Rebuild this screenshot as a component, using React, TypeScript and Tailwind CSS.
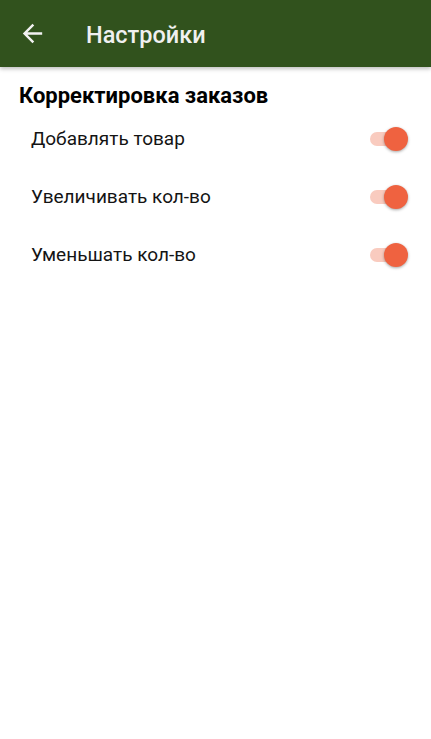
import { useState } from 'react'

const rows = ['Добавлять товар', 'Увеличивать кол-во', 'Уменьшать кол-во']

function Toggle({ on, onClick }: { on: boolean; onClick: () => void }) {
  return (
    <button onClick={onClick} className="relative w-[40px] h-[24px] shrink-0">
      <span
        className={
          on
            ? 'absolute left-[2px] top-[5px] w-[31px] h-[14px] rounded-full bg-[#f9cbbf]'
            : 'absolute left-[2px] top-[5px] w-[31px] h-[14px] rounded-full bg-[#bdbdbd]'
        }
      />
      <span
        className={
          on
            ? 'absolute left-[16px] top-0 w-[24px] h-[24px] rounded-full bg-[#ef6240] shadow-[0_1px_3px_rgba(0,0,0,0.35)]'
            : 'absolute left-0 top-0 w-[24px] h-[24px] rounded-full bg-[#f1f1f1] shadow-[0_1px_3px_rgba(0,0,0,0.35)]'
        }
      />
    </button>
  )
}

export default function App() {
  const [values, setValues] = useState([true, true, true])

  return (
    <div className="w-[431px] h-[739px] bg-white font-['Roboto',sans-serif] overflow-hidden">
      <div className="h-[67px] bg-[#31521d] flex items-center shadow-[0_2px_4px_rgba(0,0,0,0.25)] relative">
        <div className="w-[29px] h-[29px] ml-[18px]">
          <svg viewBox="0 0 24 24" width="29" height="29" fill="#f2f2f2">
            <path d="M20 11H7.83l5.59-5.59L12 4l-8 8 8 8 1.41-1.41L7.83 13H20v-2z" />
          </svg>
        </div>
        <div className="ml-[39px] pt-[4px] text-[23.5px] font-medium text-[#f0f0f0]">Настройки</div>
      </div>

      <div className="pl-[19px] pt-[13px] text-[22px] font-bold text-black leading-[32px]">
        Корректировка заказов
      </div>

      <div className="flex flex-col -mt-[2px]">
        {rows.map((label, i) => (
          <div key={label} className="h-[58px] flex items-center justify-between pl-[31px] pr-[23px]">
            <span className="text-[19px] text-[#141414]">{label}</span>
            <Toggle
              on={values[i]}
              onClick={() => setValues(values.map((v, j) => (j === i ? !v : v)))}
            />
          </div>
        ))}
      </div>
    </div>
  )
}
